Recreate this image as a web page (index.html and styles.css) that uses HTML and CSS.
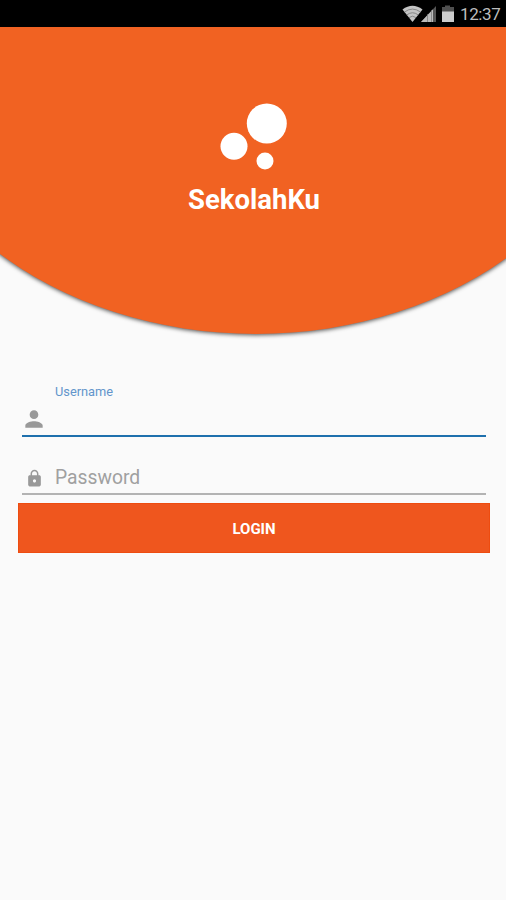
FILE: index.html
```html
<!DOCTYPE html>
<html lang="id">
<head>
    <meta charset="UTF-8">
    <meta name="viewport" content="width=device-width, initial-scale=1.0">
    <title>SekolahKu</title>
    <link rel="stylesheet" href="styles.css">
</head>
<body>
    <div class="status-bar">
        <svg class="signals" width="52" height="18" viewBox="0 0 52 18">
            <path d="M0.5 4.5Q10.5-3 20.5 4.5L10.5 17Z" fill="#c4c4c4"/>
            <path d="M2.5 7Q10.5 1.2 18.5 7M4.8 9.9Q10.5 5.6 16.2 9.9M7 12.6Q10.5 9.8 14 12.6" fill="none" stroke="#777" stroke-width="0.8"/>
            <path d="M19 17L34 1V17Z" fill="#555"/>
            <path d="M19 17L31 4.2V17Z" fill="#bbb"/>
            <path d="M25.5 9V17M29.5 5V17" stroke="#777" stroke-width="0.7"/>
            <path d="M43 0.5H48V2H52V7H40V2H43Z" fill="#505050"/>
            <path d="M40 6.5H52V17H40Z" fill="#ccc"/>
        </svg>
        <span class="clock">12:37</span>
    </div>

    <header class="hero">
        <svg class="logo" width="68" height="68" viewBox="0 0 68 68" fill="#fff">
            <circle cx="46.8" cy="20.5" r="20"/>
            <circle cx="14" cy="43.3" r="13.5"/>
            <circle cx="45" cy="58" r="8.5"/>
        </svg>
        <h1>SekolahKu</h1>
    </header>

    <form class="login-form">
        <div class="field active">
            <label for="username">Username</label>
            <div class="input-row">
                <svg class="icon" width="26" height="26" viewBox="0 0 24 24">
                    <path d="M12 12c2.21 0 4-1.79 4-4s-1.79-4-4-4-4 1.79-4 4 1.79 4 4 4zm0 2c-2.67 0-8 1.34-8 4v2h16v-2c0-2.66-5.33-4-8-4z"/>
                </svg>
                <input type="text" id="username" name="username">
            </div>
        </div>

        <div class="field">
            <div class="input-row">
                <svg class="icon" width="19" height="19" viewBox="0 0 24 24">
                    <path d="M18 8h-1V6c0-2.76-2.24-5-5-5S7 3.24 7 6v2H6c-1.1 0-2 .9-2 2v10c0 1.1.9 2 2 2h12c1.1 0 2-.9 2-2V10c0-1.1-.9-2-2-2zm-6 9c-1.1 0-2-.9-2-2s.9-2 2-2 2 .9 2 2-.9 2-2 2zm3.1-9H8.9V6c0-1.71 1.39-3.1 3.1-3.1 1.71 0 3.1 1.39 3.1 3.1v2z"/>
                </svg>
                <input type="password" id="password" name="password" placeholder="Password">
            </div>
        </div>

        <button type="submit">LOGIN</button>
    </form>
</body>
</html>
```

FILE: styles.css
```css
* {
    box-sizing: border-box;
}
body {
    margin: 0;
    min-height: 100vh;
    background-color: #fafafa;
    font-family: Roboto, sans-serif;
}
.status-bar {
    display: flex;
    justify-content: flex-end;
    align-items: center;
    gap: 6px;
    height: 27px;
    padding-right: 6px;
    background-color: #000;
}
.signals {
    display: block;
    margin-top: 1px;
}
.clock {
    width: 40px;
    color: #bdbdbd;
    font-size: 17px;
    letter-spacing: -0.4px;
    line-height: 27px;
    padding-top: 2px;
    white-space: nowrap;
}
.hero {
    position: relative;
    display: flex;
    flex-direction: column;
    align-items: center;
    height: 323px;
    padding: 76px 0 0 2px;
    overflow: hidden;
}
/* big ellipse, only its lower part shows */
.hero::before {
    content: "";
    position: absolute;
    left: -114px;
    bottom: 16px;
    width: 740px;
    height: 576px;
    border-radius: 50%;
    background-color: #f16222;
    box-shadow: 0 1px 4px rgba(0, 0, 0, 0.7);
}
.logo {
    position: relative;
    display: block;
}
.hero h1 {
    position: relative;
    margin: 13px 0 0;
    color: #fff;
    font-size: 27.5px;
    font-weight: bold;
    line-height: 32px;
}
.login-form {
    padding: 34px 16px 0 18px;
}
.field {
    height: 58px;
    margin: 0 4px;
    padding-top: 23px;
    border-bottom: 2px solid #b3b3b3;
}
.field.active {
    height: 53px;
    padding-top: 0;
    border-bottom-color: #1e70ad;
}
.field label {
    display: block;
    height: 16px;
    padding-left: 33px;
    color: #6295cb;
    font-size: 12.8px;
    line-height: 16px;
}
.input-row {
    display: flex;
    align-items: center;
    height: 34px;
}
.field.active .input-row {
    height: 38px;
}
.icon {
    flex: none;
    margin: 2px 0 0 3px;
    fill: #999;
}
.field.active .icon {
    margin: 0 0 0 -1px;
}
.input-row input {
    flex: 1;
    min-width: 0;
    height: 34px;
    padding: 0;
    margin-left: 11px;
    border: none;
    outline: none;
    background: none;
    color: #333;
    font-family: inherit;
    font-size: 19.3px;
}
.input-row input::placeholder {
    color: #a0a0a0;
}
button {
    display: block;
    width: 100%;
    height: 50px;
    margin-top: 8px;
    padding: 1px 0 0;
    border: 1px solid #ee4c10;
    background-color: #ef561e;
    color: #fff;
    font-family: inherit;
    font-size: 15px;
    font-weight: bold;
    cursor: pointer;
}
```
